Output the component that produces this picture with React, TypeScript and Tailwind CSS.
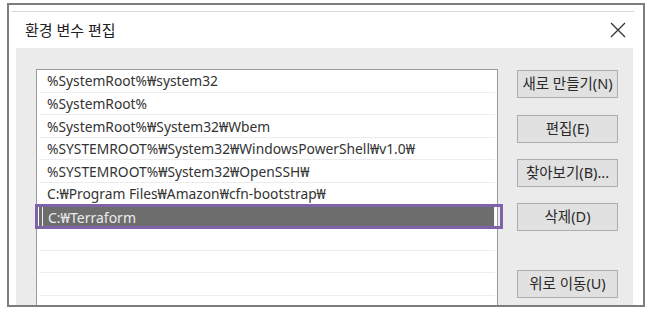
import React from 'react';

const paths = [
    '%SystemRoot%₩system32',
    '%SystemRoot%',
    '%SystemRoot%₩System32₩Wbem',
    '%SYSTEMROOT%₩System32₩WindowsPowerShell₩v1.0₩',
    '%SYSTEMROOT%₩System32₩OpenSSH₩',
    'C:₩Program Files₩Amazon₩cfn-bootstrap₩',
    'C:₩Terraform',
    '',
    '',
    '',
    '',
];

const SELECTED = 6;

const font = { fontFamily: '"Noto Sans", "Noto Sans CJK KR", sans-serif' };

/**
 * Push button in the classic Windows style
 */
const DialogButton: React.FC<{ label: string; className?: string }> = ({ label, className = '' }) => (
    <button
        className={`h-[28px] w-[101px] shrink-0 bg-[#e1e1e1] border border-[#adadad] text-[14.5px] text-[#2a2a2a] ${className}`}
    >
        {label}
    </button>
);

export default function App() {
    return (
        <div className="w-[651px] h-[311px] bg-white overflow-hidden pt-[3px] pl-[7px]" style={font}>
            {/* Dialog frame */}
            <div className="w-[638px] h-[304px] border-2 border-[#7d7d7d] flex flex-col overflow-hidden">
                <div className="shrink-0 mt-[6px] ml-[3px] w-[622px] h-px bg-[#d6d6d6]" />

                {/* Title bar */}
                <div className="shrink-0 h-[36px] flex items-center justify-between pl-[16px] pr-[16px]">
                    <span className="text-[15px] text-[#222]">환경 변수 편집</span>
                    <svg width="18" height="18" viewBox="0 0 18 18" className="text-[#333]">
                        <path d="M2 2 L16 16 M16 2 L2 16" stroke="currentColor" strokeWidth="1.3" fill="none" />
                    </svg>
                </div>

                {/* Body */}
                <div className="flex-1 min-h-0 overflow-hidden ml-[7px] w-[617px] bg-[#ebebeb] flex pl-[20px] pt-[21px]">
                    {/* Path list */}
                    <div className="w-[462px] shrink-0 self-stretch bg-white border border-[#9a9a9a] border-b-0 px-[2px]">
                        {paths.map((p, i) =>
                            i === SELECTED ? (
                                <div key={i} className="relative h-[22.6px] -mx-[2px] px-[2px]">
                                    <div className="h-full bg-[#6d6d6d] flex items-center pl-[3px] pr-0">
                                        <div className="h-full flex-1 border-l border-r border-[#f2f2f2] flex items-center pl-[5px] pt-[2px] text-[14px] text-[#ececec]">
                                            {p}
                                        </div>
                                    </div>
                                    {/* Highlight annotation */}
                                    <div className="absolute -left-[2px] -right-[6px] -top-[2px] -bottom-[1px] border-[3px] border-[#7e63ab]" />
                                </div>
                            ) : (
                                <div
                                    key={i}
                                    className="h-[22.6px] border-b border-[#ececec] flex items-center pl-[8px] pt-[2px] text-[13.8px] text-[#333] whitespace-nowrap"
                                >
                                    {p}
                                </div>
                            )
                        )}
                    </div>

                    {/* Buttons */}
                    <div className="ml-[19px] pt-px flex flex-col">
                        <DialogButton label="새로 만들기(N)" />
                        <DialogButton label="편집(E)" className="mt-[17px]" />
                        <DialogButton label="찾아보기(B)..." className="mt-[16px]" />
                        <DialogButton label="삭제(D)" className="mt-[16px]" />
                        <DialogButton label="위로 이동(U)" className="mt-[39px]" />
                    </div>
                </div>
            </div>
        </div>
    );
}
